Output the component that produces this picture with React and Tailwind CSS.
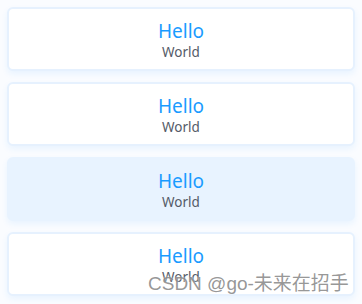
import React from 'react';

const items = [false, false, true, false];

export default function App() {
  return (
    <div className="relative w-[362px] h-[304px] bg-[#fafcff] px-[7px] pt-[7px] flex flex-col gap-[11px]" style={{ fontFamily: '"Noto Sans", "Open Sans", sans-serif' }}>
      {items.map((active, i) => (
        <div
          key={i}
          className={`h-[64px] pt-[3px] rounded-[6px] flex flex-col items-center justify-center shadow-[0_3px_6px_rgba(24,144,255,0.08)] ${active ? 'bg-[#e8f3ff] border-2 border-[#e8f3ff]' : 'bg-white border-2 border-[#e6f1fe]'}`}
        >
          <span className="text-[19px] leading-[20px] text-[#1a9bff]">Hello</span>
          <span className="mt-[4px] text-[13.5px] leading-[15px] text-[#555b68]">World</span>
        </div>
      ))}
      <div className="absolute left-[148px] top-[273px] text-[19px] leading-[22px] text-[#7c7c7c]/80 whitespace-nowrap [text-shadow:0_0_2px_rgba(255,255,255,0.9)]" style={{ fontFamily: '"Liberation Sans", "Noto Sans CJK SC", sans-serif' }}>
        CSDN @go-未来在招手
      </div>
    </div>
  );
}
